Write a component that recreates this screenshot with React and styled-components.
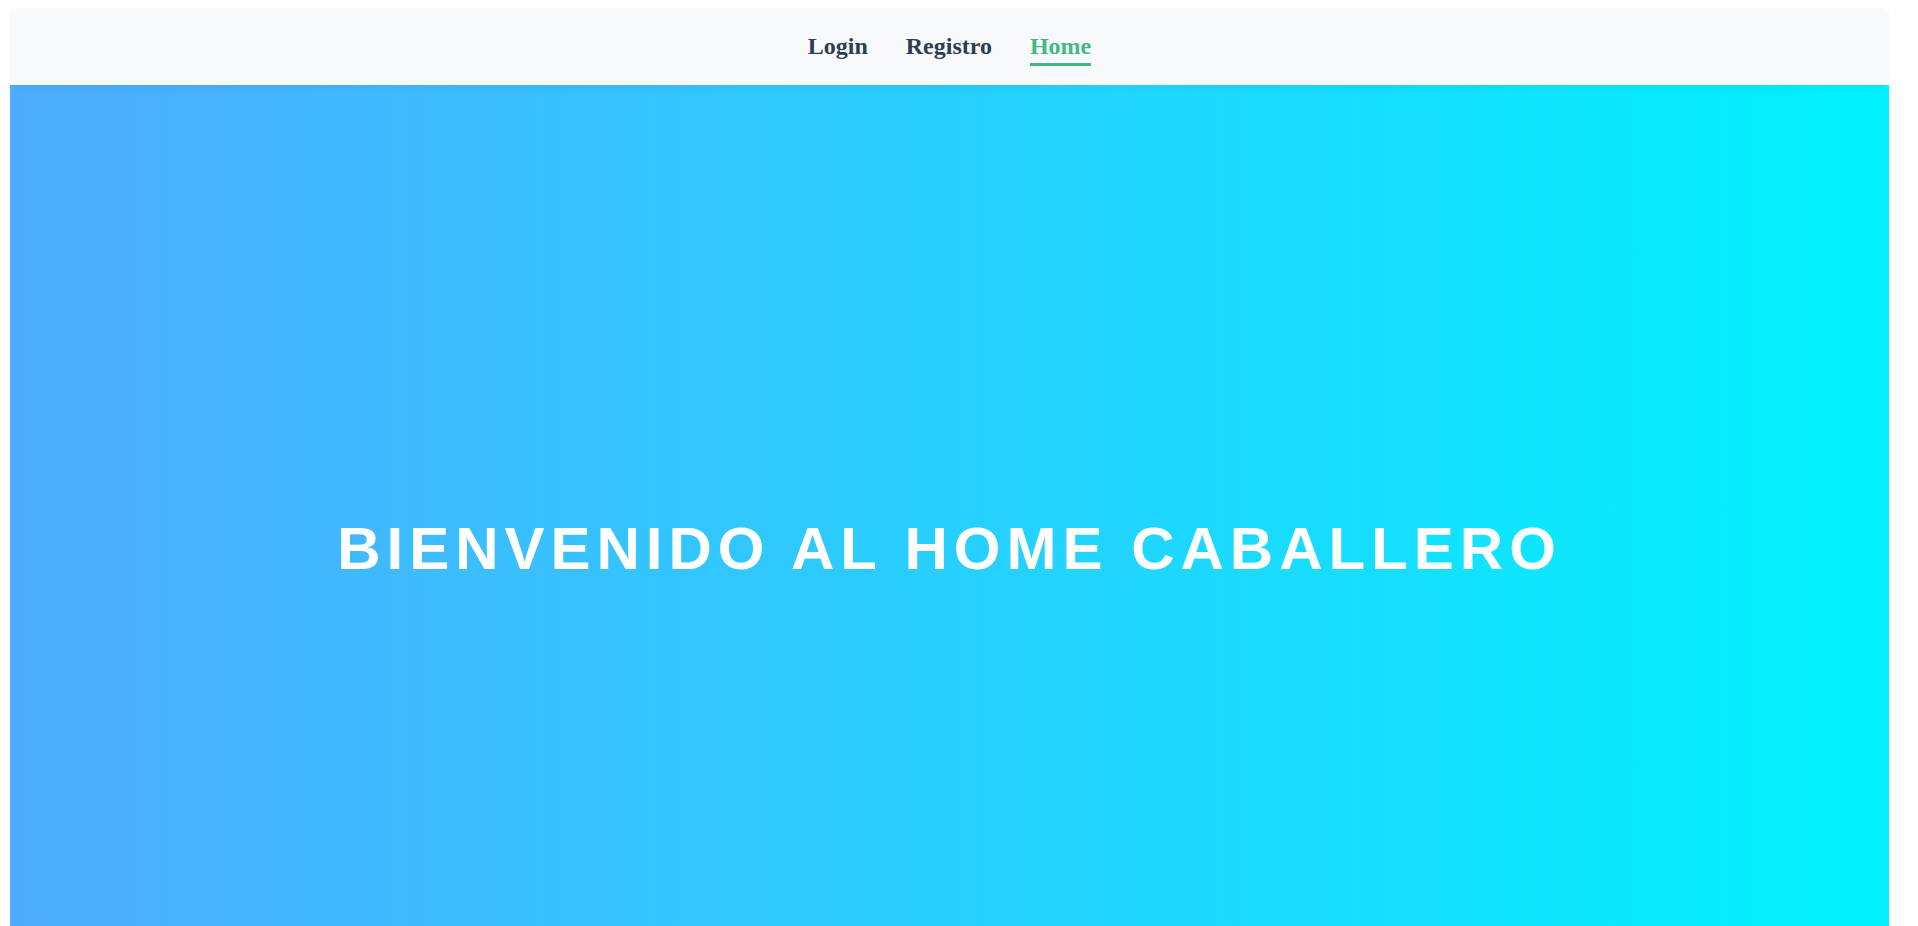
import React from "react";
import styled, { createGlobalStyle } from "styled-components";

const GlobalStyle = createGlobalStyle`
  html {
    background: #ffffff;
  }
  body {
    margin: 8px 29px 8px 10px;
    font-family: "Liberation Serif", "Times New Roman", serif;
  }
`;

const Page = styled.div`
  display: flex;
  flex-direction: column;
`;

const NavBar = styled.nav`
  position: relative;
  z-index: 1;
  display: flex;
  justify-content: center;
  align-items: flex-end;
  gap: 38px;
  padding: 25px 0 19px;
  background: #f8f9fa;
  border-radius: 12px;
  box-shadow: 0 2px 8px rgba(0, 0, 0, 0.06);
`;

const NavLink = styled.a`
  font-family: "Liberation Serif", "Times New Roman", serif;
  font-size: 24px;
  font-weight: 700;
  line-height: 27px;
  text-decoration: none;
  cursor: pointer;
  color: ${(p) => (p.$active ? "#42b983" : "#2c3e50")};
  padding-bottom: 3px;
  border-bottom: 3px solid ${(p) => (p.$active ? "#42b983" : "transparent")};
`;

const Hero = styled.section`
  min-height: 100vh;
  display: flex;
  align-items: center;
  justify-content: center;
  background: linear-gradient(to right, #4facfe 0%, #00f2fe 100%);
`;

const Title = styled.h1`
  margin: 0;
  font-family: "Liberation Sans", Arial, sans-serif;
  font-size: 60px;
  font-weight: 700;
  letter-spacing: 6px;
  text-transform: uppercase;
  color: #ffffff;
  text-align: center;
`;

export default function App() {
  return (
    <>
      <GlobalStyle />
      <Page>
        <NavBar>
          <NavLink>Login</NavLink>
          <NavLink>Registro</NavLink>
          <NavLink $active>Home</NavLink>
        </NavBar>
        <Hero>
          <Title>Bienvenido al Home Caballero</Title>
        </Hero>
      </Page>
    </>
  );
}
